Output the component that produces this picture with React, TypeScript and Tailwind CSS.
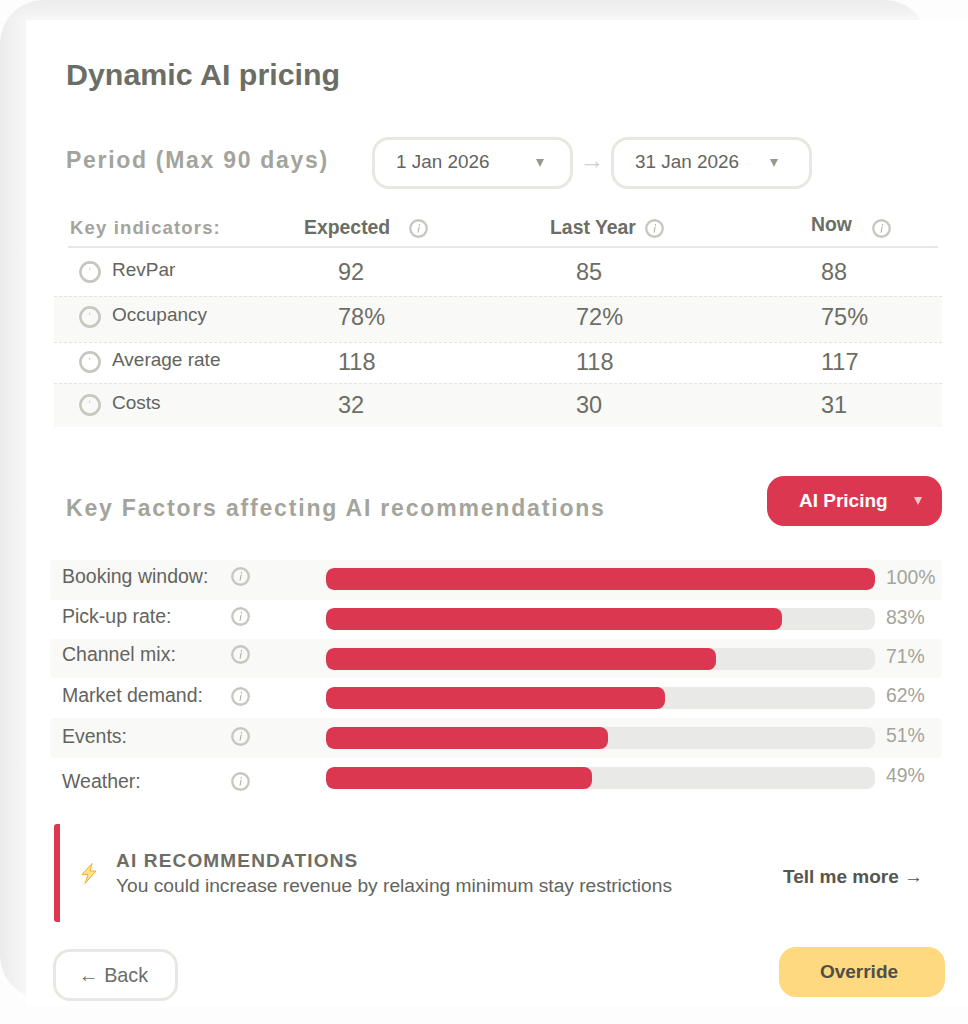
const font = '[font-family:"Liberation_Sans",Arial,sans-serif]'

function InfoIcon({ className = '' }: { className?: string }) {
  return (
    <svg viewBox="0 0 18 18" className={`h-[19px] w-[19px] shrink-0 ${className}`} fill="none">
      <circle cx="9" cy="9" r="7.8" stroke="#c6c7bf" strokeWidth="2.2" />
      <path d="M9.6 7.6 8.6 12.6M9.9 5 9.8 5.8" stroke="#a3a49b" strokeWidth="0.9" strokeLinecap="round" />
    </svg>
  )
}

function DialIcon() {
  return (
    <svg viewBox="0 0 22 22" className="h-[22px] w-[22px] shrink-0" fill="none">
      <circle cx="11" cy="11" r="9.6" stroke="#c6c7bf" strokeWidth="2.6" />
      <path d="M10.8 6.5 10.5 9" stroke="#c6c7bf" strokeWidth="0.8" />
    </svg>
  )
}

function Caret({ className = 'border-t-[#97988f]' }: { className?: string }) {
  return <span className={`h-0 w-0 border-x-[4.5px] border-t-[8px] border-x-transparent ${className}`} />
}

function DateBox({ label, textWidth }: { label: string; textWidth: string }) {
  return (
    <div className="flex h-[52px] w-[201px] items-center rounded-[17px] border-[3px] border-[#e8e8e2] bg-white pl-[21px] text-[18.9px] text-[#63645d]">
      <span className={`mb-[2px] ${textWidth}`}>{label}</span>
      <Caret />
    </div>
  )
}

const indicators = [
  { name: 'RevPar', expected: '92', last: '85', now: '88', alt: false, h: 'h-[48px]', nudge: '' },
  { name: 'Occupancy', expected: '78%', last: '72%', now: '75%', alt: true, h: 'h-[46px]', nudge: 'pb-[6px]' },
  { name: 'Average rate', expected: '118', last: '118', now: '117', alt: false, h: 'h-[41px]', nudge: 'pb-[5px]' },
  { name: 'Costs', expected: '32', last: '30', now: '31', alt: true, h: 'h-[44px]', nudge: 'pb-[2px]' },
]

const factors = [
  { name: 'Booking window:', pct: 100, bar: 'w-full', alt: true, h: 'h-[40px]', label: 'mb-[7px]', barShift: 'mb-[2px]' },
  { name: 'Pick-up rate:', pct: 83, bar: 'w-[456px]', alt: false, h: 'h-[39px]', label: 'mb-[6px]', barShift: 'mb-[2px]' },
  { name: 'Channel mix:', pct: 71, bar: 'w-[390px]', alt: true, h: 'h-[39px]', label: 'mb-[8px]', barShift: '' },
  { name: 'Market demand:', pct: 62, bar: 'w-[339px]', alt: false, h: 'h-[40px]', label: 'mb-[4px]', barShift: '' },
  { name: 'Events:', pct: 51, bar: 'w-[282px]', alt: true, h: 'h-[40px]', label: 'mb-[3px]', barShift: '' },
  { name: 'Weather:', pct: 49, bar: 'w-[266px]', alt: false, h: 'h-[40px]', label: 'mt-[7px]', barShift: '' },
]

export default function App() {
  return (
    <div className={`h-[1024px] w-[968px] overflow-hidden bg-[#fdfdfd] ${font}`}>
      <div className="h-[999px] w-[928px] rounded-[44px] bg-[linear-gradient(90deg,#ebebeb,#f6f6f600_26px),linear-gradient(180deg,#ececec,#f7f7f7_20px)] pl-[26px] pt-[20px]">
        <div className="h-[986px] w-[942px] bg-white pl-[24px] pr-[26px]">
          <h1 className="pl-[16px] pt-[31px] text-[30.4px] font-bold leading-[46px] text-[#6c6d65]">Dynamic AI pricing</h1>

          <div className="mt-[40px] flex items-center pl-[16px]">
            <div className="w-[306px] pb-[5px] text-[23px] font-bold tracking-[1.7px] text-[#a3a49b]">Period (Max 90 days)</div>
            <DateBox label="1 Jan 2026" textWidth="w-[140px]" />
            <span className="mb-[5px] flex w-[38px] justify-center text-[25px] text-[#d0d1ca]">→</span>
            <DateBox label="31 Jan 2026" textWidth="w-[135px]" />
          </div>

          <div className="mt-[25px] ml-[18px] mr-[4px] grid h-[34px] grid-cols-[236px_246px_261px_1fr] items-center border-b-2 border-[#e8e8e2] pb-[3px] text-[19.4px] font-bold leading-none text-[#6c6d65]">
            <span className="pl-[2px] text-[18.5px] tracking-[1.15px] text-[#a3a49b]">Key indicators:</span>
            <span className="flex items-center"><span className="mb-[1px]">Expected</span><InfoIcon className="ml-[19px]" /></span>
            <span className="flex items-center"><span className="mb-[1px]">Last Year</span><InfoIcon className="ml-[9px]" /></span>
            <span className="flex items-center"><span className="-mt-[7px]">Now</span><InfoIcon className="ml-[20px]" /></span>
          </div>

          <div className="ml-[4px]">
            {indicators.map(row => (
              <div
                key={row.name}
                className={`grid grid-cols-[284px_238px_245px_1fr] items-center border-t border-dashed border-[#e4e4df] first:border-t-0 ${row.h} ${row.nudge} ${row.alt ? 'bg-[#f9f9f7]' : ''}`}
              >
                <span className="flex items-center gap-[11px] pl-[25px] text-[19px] text-[#63645d]">
                  <DialIcon />
                  <span className="mb-[3px]">{row.name}</span>
                </span>
                <span className="mt-[2px] text-[23.5px] text-[#6c6d65]">{row.expected}</span>
                <span className="mt-[2px] text-[23.5px] text-[#6c6d65]">{row.last}</span>
                <span className="mt-[2px] text-[23.5px] text-[#6c6d65]">{row.now}</span>
              </div>
            ))}
          </div>

          <div className="mt-[49px] flex h-[50px] items-center justify-between pl-[16px]">
            <h2 className="pt-[14px] text-[23px] font-bold tracking-[1.82px] text-[#a3a49b]">Key Factors affecting AI recommendations</h2>
            <button className="flex h-[50px] w-[175px] items-center rounded-[17px] bg-[#dc3750] pl-[32px] text-[19px] font-bold text-white">
              <span className="w-[115px] text-left">AI Pricing</span>
              <Caret className="border-t-[#f5c6cd]" />
            </button>
          </div>

          <div className="mt-[34px]">
            {factors.map(row => (
              <div key={row.name} className={`flex items-center rounded-[3px] ${row.h} ${row.alt ? 'bg-[#f9f9f7]' : ''}`}>
                <span className={`w-[181px] pl-[12px] text-[19.5px] text-[#63645d] ${row.label}`}>{row.name}</span>
                <InfoIcon className={row.label} />
                <div className={`ml-[76px] h-[22px] w-[549px] overflow-hidden rounded-[8px] bg-[#e9e9e7] ${row.barShift}`}>
                  <div className={`h-full rounded-[8px] bg-[#dc3750] ${row.bar}`} />
                </div>
                <span className="mb-[4px] ml-[11px] text-[19.4px] text-[#a3a49b]">{row.pct}%</span>
              </div>
            ))}
          </div>

          <div className="mt-[26px] ml-[4px] flex h-[98px] items-center rounded-[3px] border-l-[6px] border-[#dc3750]">
            <svg viewBox="0 0 16 21" className="ml-[20px] h-[21px] w-[18px] shrink-0" fill="none">
              <path d="M11 .5 1 11.5h6L4 20.5 15 8H9l2-7.5Z" fill="#ffe38a" stroke="#f5a623" strokeWidth="0.9" strokeLinejoin="round" />
            </svg>
            <div className="ml-[18px] w-[667px]">
              <div className="text-[19px] font-bold leading-[24px] tracking-[1.17px] text-[#6c6d65]">AI RECOMMENDATIONS</div>
              <div className="text-[19.2px] leading-[25px] text-[#63645d]">You could increase revenue by relaxing minimum stay restrictions</div>
            </div>
            <span className="mt-[8px] text-[19px] font-bold text-[#55564f]">Tell me more →</span>
          </div>

          <div className="mt-[27px] flex items-start justify-between pl-[3px]">
            <button className="h-[52px] w-[125px] rounded-[17px] border-[3px] border-[#e8e8e2] bg-white pr-[4px] pt-[1px] text-[19.8px] text-[#6c6d65]">← Back</button>
            <button className="-mr-[3px] -mt-[2px] h-[50px] w-[166px] rounded-[17px] bg-[#ffd97f] pr-[6px] text-[19px] font-bold text-[#4f4f49]">Override</button>
          </div>
        </div>
      </div>
    </div>
  )
}
